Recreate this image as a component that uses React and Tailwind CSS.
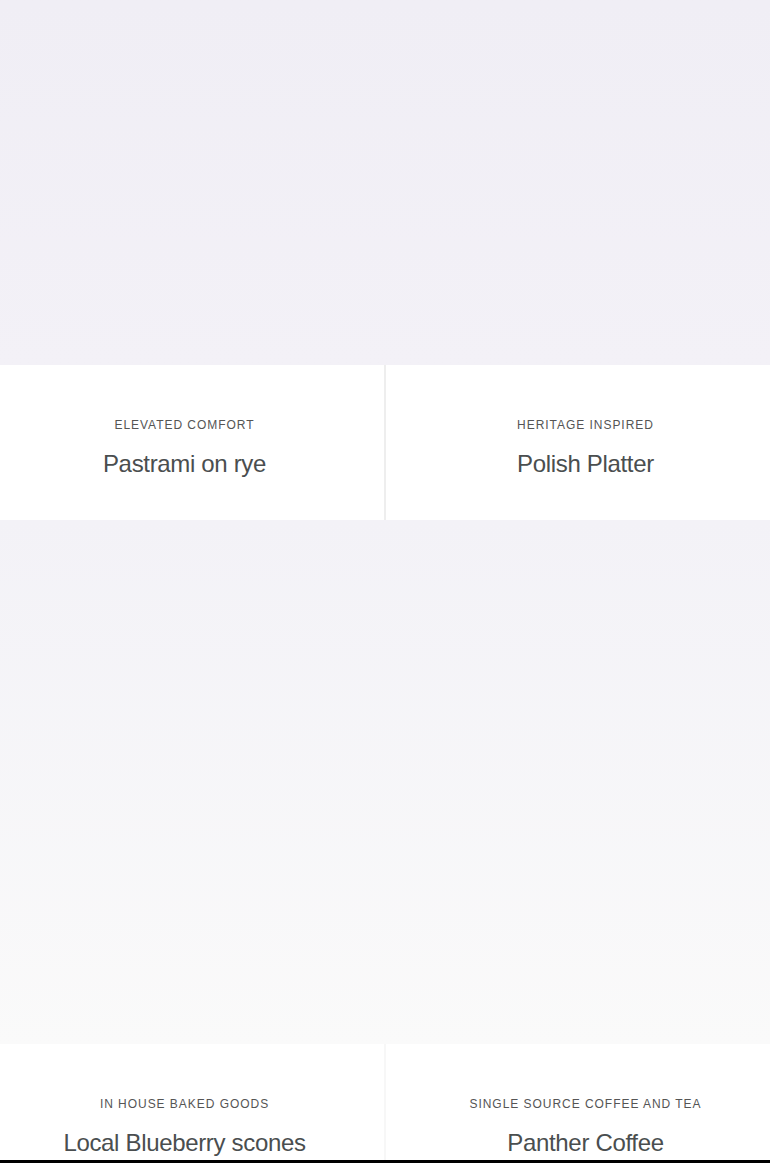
const items = [
  [
    { tag: "ELEVATED COMFORT", name: "Pastrami on rye" },
    { tag: "HERITAGE INSPIRED", name: "Polish Platter" },
  ],
  [
    { tag: "IN HOUSE BAKED GOODS", name: "Local Blueberry scones" },
    { tag: "SINGLE SOURCE COFFEE AND TEA", name: "Panther Coffee" },
  ],
];

function Card({ item, side, faint }) {
  return (
    <div
      className={
        side === "left"
          ? `flex-1 flex flex-col items-center pr-[15px] pt-[52px] pb-[40px] border-r-2 ${faint ? "border-[#f7f7f7]" : "border-[#eeeeee]"}`
          : "flex-1 flex flex-col items-center pl-[15px] pt-[52px] pb-[40px]"
      }
    >
      <p className="text-[12px] leading-4 tracking-[0.08em] text-[#555555]">{item.tag}</p>
      <h3 className="mt-[15px] text-[24px] leading-8 tracking-[-0.33px] text-[#4a4e4f]">{item.name}</h3>
    </div>
  );
}

export default function App() {
  return (
    <div className="bg-white" style={{ fontFamily: '"Liberation Sans", Arial, sans-serif' }}>
      <div className="h-[1160px] overflow-hidden">
        <div className="h-[365px] bg-gradient-to-b from-[#f0eef5] to-[#f3f1f7]" />
        <div className="flex">
          <Card item={items[0][0]} side="left" />
          <Card item={items[0][1]} side="right" />
        </div>
        <div className="h-[524px] bg-gradient-to-b from-[#f3f2f7] to-[#fafafa]" />
        <div className="flex">
          <Card item={items[1][0]} side="left" faint />
          <Card item={items[1][1]} side="right" />
        </div>
      </div>
      <div className="h-[3px] bg-black" />
    </div>
  );
}
